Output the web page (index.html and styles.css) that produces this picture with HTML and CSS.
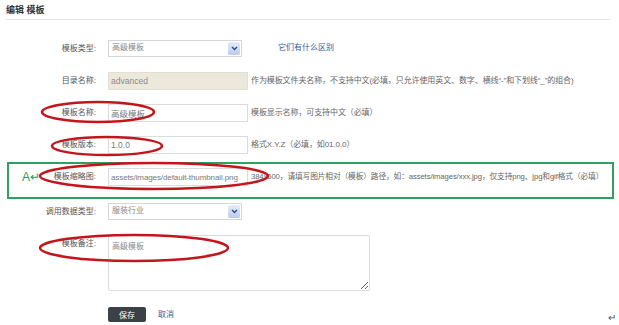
FILE: index.html
```html
<!DOCTYPE html>
<html lang="zh-CN">
<head>
  <meta charset="UTF-8" />
  <meta name="viewport" content="width=device-width, initial-scale=1.0" />
  <title>编辑 模板</title>
  <link rel="stylesheet" href="styles.css">
</head>
<body>
  <div class="page">
    <h1 class="title">编辑 模板</h1>

    <form class="form" id="tplForm">
      <div class="row">
        <label class="label">模板类型:</label>
        <div class="select">
          <span class="select-text">高级模板</span>
          <span class="select-arrow">
            <svg width="7" height="5" viewBox="0 0 7 5"><path d="M1 1 L3.5 3.6 L6 1" fill="none" stroke="#2b4f86" stroke-width="1.4"/></svg>
          </span>
        </div>
        <a class="link diff" href="#">它们有什么区别</a>
      </div>

      <div class="row">
        <label class="label" for="dir">目录名称:</label>
        <input class="input readonly" id="dir" type="text" value="advanced" readonly />
        <span class="help">作为模板文件夹名称，不支持中文(必填，只允许使用英文、数字、横线“-”和下划线“_”的组合)</span>
      </div>

      <div class="row">
        <label class="label" for="name">模板名称:</label>
        <input class="input" id="name" type="text" value="高级模板" />
        <span class="help">模板显示名称，可支持中文（必填）</span>
      </div>

      <div class="row">
        <label class="label" for="version">模板版本:</label>
        <input class="input" id="version" type="text" value="1.0.0" />
        <span class="help">格式X.Y.Z（必填，如01.0.0）</span>
      </div>

      <div class="row marked">
        <label class="label mark-label" for="thumb"><span class="mark">A↵</span>模板缩略图:</label>
        <input class="input thumb" id="thumb" type="text" value="assets/images/default-thumbnail.png" />
        <span class="help">384x600，请填写图片相对（模板）路径，如：assets/images/xxx.jpg，仅支持png、jpg和gif格式（必填）</span>
      </div>

      <div class="row">
        <label class="label">调用数据类型:</label>
        <div class="select">
          <span class="select-text">服装行业</span>
          <span class="select-arrow">
            <svg width="7" height="5" viewBox="0 0 7 5"><path d="M1 1 L3.5 3.6 L6 1" fill="none" stroke="#2b4f86" stroke-width="1.4"/></svg>
          </span>
        </div>
      </div>

      <div class="row">
        <label class="label" for="note">模板备注:</label>
        <textarea class="textarea" id="note">高级模板</textarea>
      </div>

      <div class="actions">
        <button class="btn" type="submit">保存</button>
        <a class="link cancel" href="#">取消</a>
        <span class="pilcrow">↵</span>
      </div>
    </form>

    <!-- red marks drawn over the form -->
    <svg class="marks" width="619" height="325" viewBox="0 0 619 325">
      <ellipse cx="98" cy="112" rx="56" ry="10" />
      <ellipse cx="107" cy="146" rx="55" ry="9" />
      <ellipse cx="154" cy="176" rx="114" ry="13" />
      <ellipse cx="134" cy="248" rx="94" ry="13" />
    </svg>
  </div>
</body>
</html>
```

FILE: styles.css
```css
body {
  margin: 0;
  background-color: #ffffff;
  color: #555;
  font-family: 'Liberation Sans', 'Noto Sans CJK SC', sans-serif;
  font-size: 8px;
}
.page {
  position: relative;
  width: 619px;
  height: 325px;
  padding-top: 5px;
  box-sizing: border-box;
  overflow: hidden;
}
.title {
  margin: 0 9px 0 6px;
  padding-bottom: 4px;
  font-size: 9px;
  line-height: 10px;
  font-weight: bold;
  color: #333;
  border-bottom: 1px solid #e4e4e4;
}
.form {
  margin-top: 20px;
  display: flex;
  flex-direction: column;
  gap: 14px;
}
.row {
  display: grid;
  grid-template-columns: 96px max-content 1fr;
  align-items: start;
}
.label {
  text-align: right;
  line-height: 18px;
  white-space: nowrap;
  color: #555;
}
.input {
  margin: 0 0 0 12px;
  width: 140px;
  height: 18px;
  box-sizing: border-box;
  border: 1px solid #dcdcdc;
  padding: 0 2px;
  font-family: inherit;
  font-size: 8.5px;
  color: #7a7a7a;
  background: #fff;
  outline: none;
}
.input.thumb {
  font-size: 8px;
  letter-spacing: -0.1px;
}
.input.readonly {
  background-color: #ece9dc;
  border-color: #e2dfd2;
  color: #8a8a8a;
}
.help {
  margin-left: 3px;
  line-height: 18px;
  white-space: nowrap;
  color: #666;
  letter-spacing: -0.1px;
}
.marked .help {
  font-size: 7.7px;
}
.select {
  margin-left: 12px;
  width: 134px;
  height: 17px;
  box-sizing: border-box;
  border: 1px solid #d6d6d6;
  display: flex;
  align-items: stretch;
  justify-content: space-between;
  background: #fff;
}
.select-text {
  padding: 0 3px;
  line-height: 13px;
  color: #888;
}
.select-arrow {
  width: 12px;
  margin: 1px;
  display: flex;
  align-items: center;
  justify-content: center;
  background: linear-gradient(#e6edf9, #b9cbea);
  border-radius: 2px;
}
.link {
  color: #2c62a8;
  text-decoration: none;
}
.diff {
  margin-left: 36px;
  line-height: 15px;
}
.marked {
  grid-template-columns: 87px max-content 1fr;
  margin: -6px 5px -10px 7px;
  padding: 4px 0 11px;
  border: 2px solid #2fa060;
}
.mark-label {
  display: flex;
  justify-content: space-between;
  align-items: center;
}
.mark {
  margin-left: 13px;
  font-size: 12px;
  color: #2e9a55;
  line-height: 18px;
}
.textarea {
  margin: 0 0 0 12px;
  width: 262px;
  height: 56px;
  box-sizing: border-box;
  border: 1px solid #dcdcdc;
  border-radius: 2px;
  padding: 4px 3px;
  font-family: inherit;
  font-size: 8px;
  color: #888;
  resize: both;
  outline: none;
}
.actions {
  margin-top: 2px;
  padding-left: 108px;
  display: flex;
  align-items: flex-start;
}
.btn {
  width: 38px;
  height: 15px;
  padding: 0;
  border: none;
  border-radius: 2px;
  background-color: #3b4247;
  color: #fff;
  font-family: inherit;
  font-size: 8px;
}
.cancel {
  margin-left: 12px;
  line-height: 15px;
}
.pilcrow {
  margin-left: auto;
  margin-right: 3px;
  margin-top: 6px;
  font-size: 10px;
  line-height: 10px;
  color: #555;
}
.marks {
  position: absolute;
  left: 0;
  top: 0;
  pointer-events: none;
}
.marks ellipse {
  fill: none;
  stroke: #c3161c;
  stroke-width: 2.5;
}
```
